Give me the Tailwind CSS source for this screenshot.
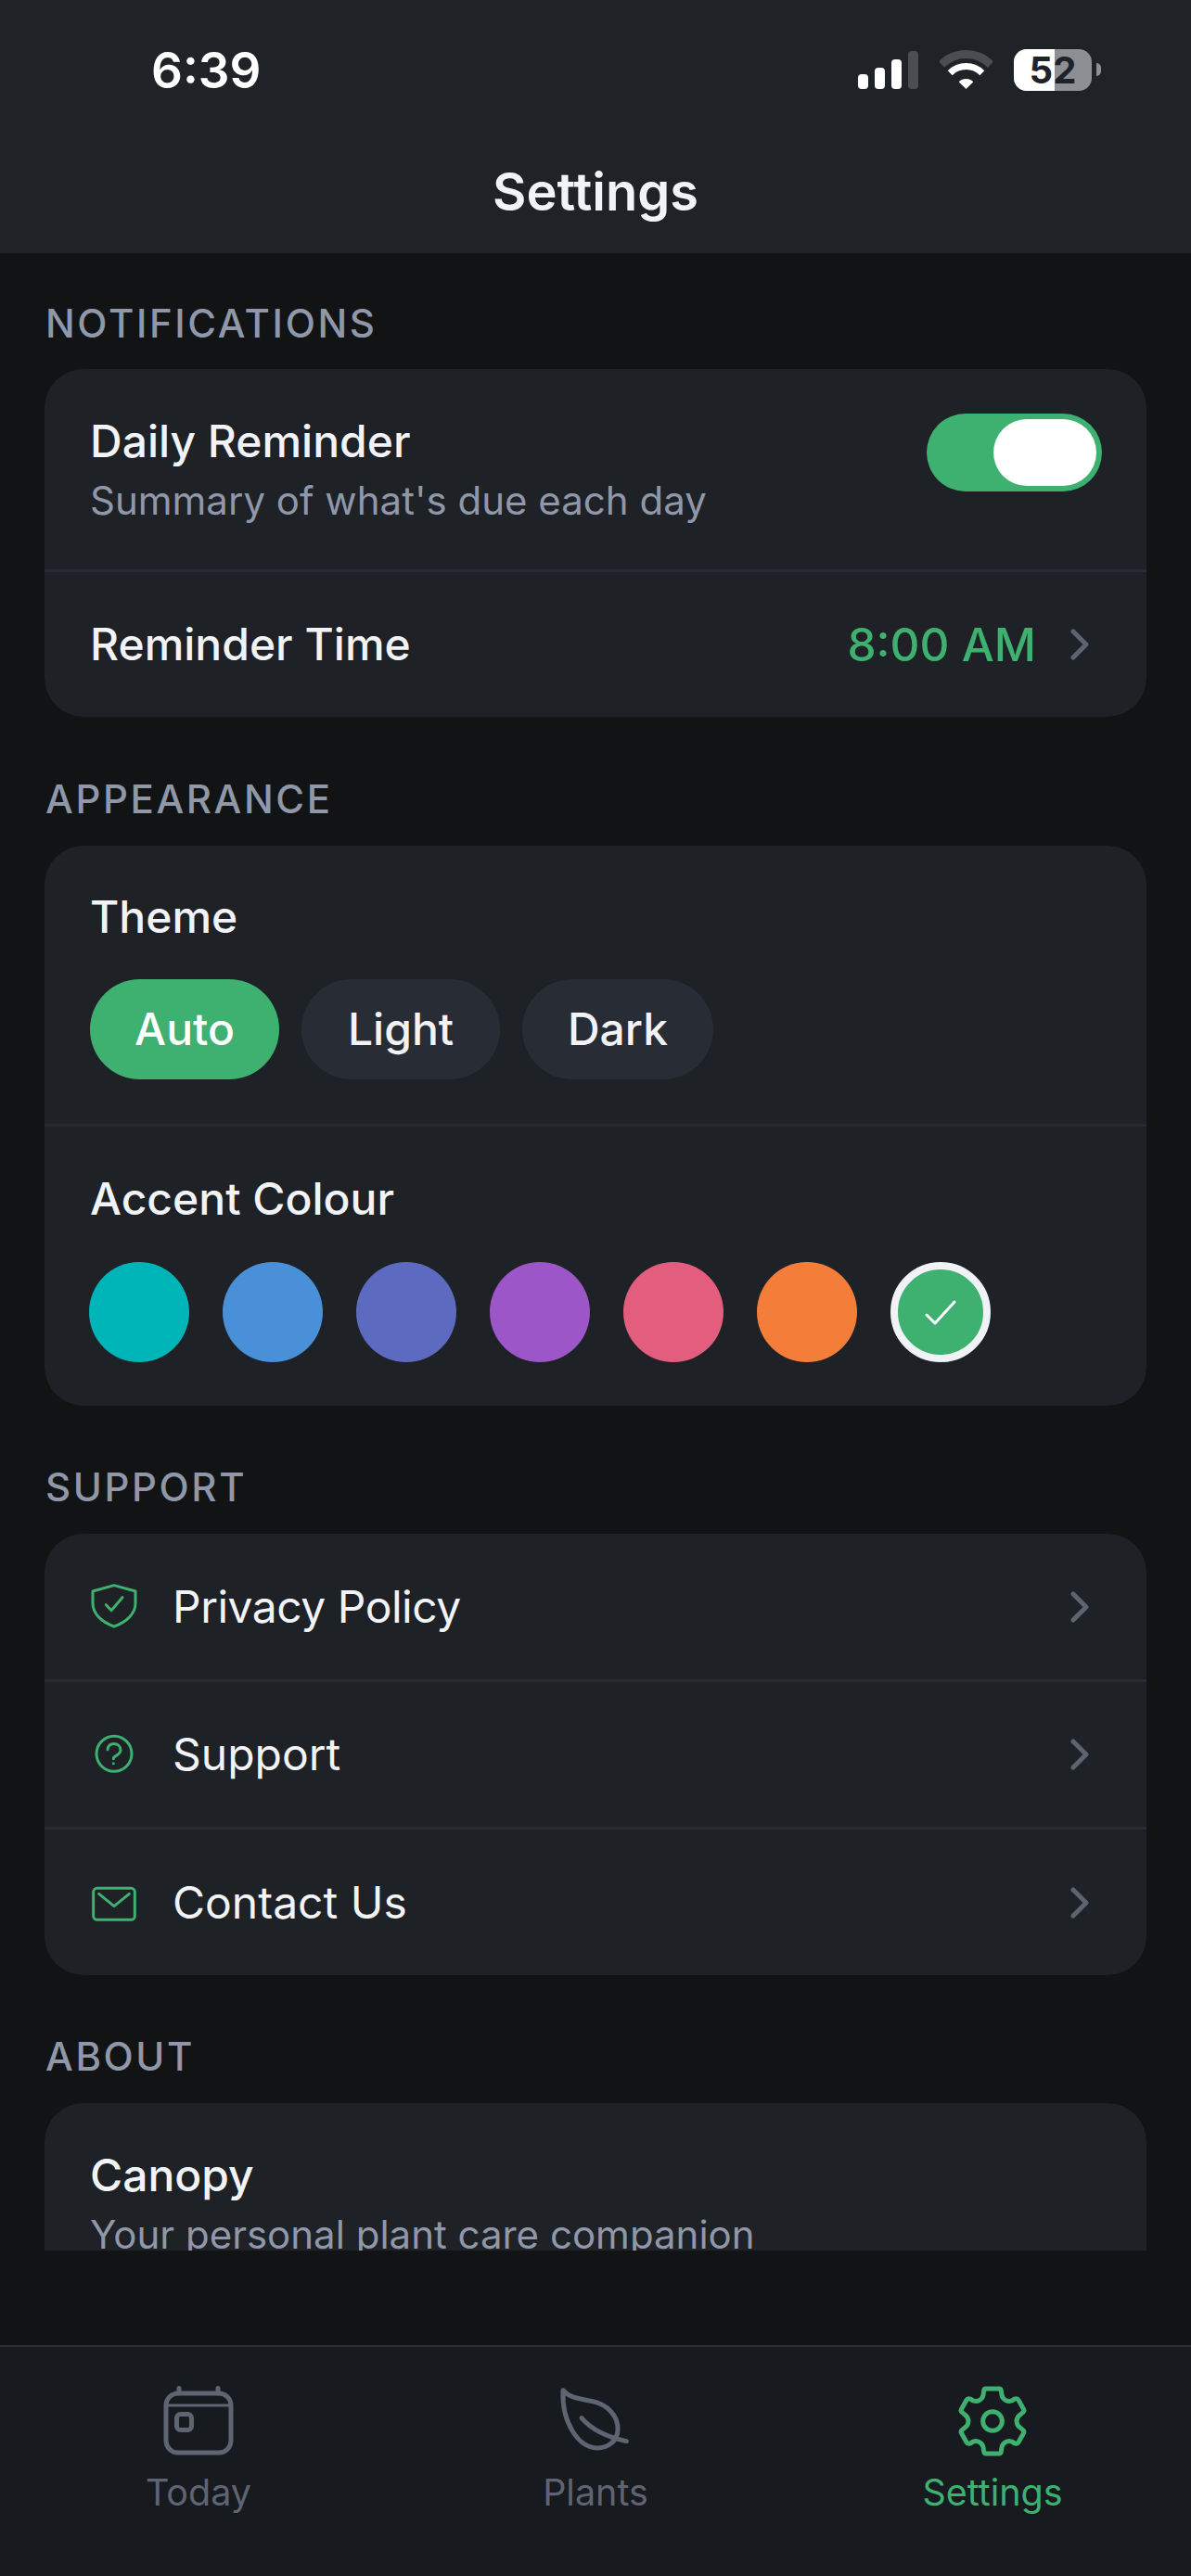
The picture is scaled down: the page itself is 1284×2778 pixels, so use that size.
<!DOCTYPE html>
<html lang="en">
<head>
    <meta charset="UTF-8">
    <meta name="viewport" content="width=device-width, initial-scale=1.0">
    <title>Settings</title>
    <script src="https://cdn.jsdelivr.net/npm/@tailwindcss/browser@4"></script>
</head>
<body class="bg-[#111315] font-['Inter',sans-serif]">
    <div class="flex flex-col w-[1284px] h-[2778px] overflow-hidden">

        <!-- Header with status bar -->
        <header class="h-[273px] shrink-0 bg-[#1f2328]">
            <div class="flex items-start h-[172px] pt-[53px]">
                <span class="w-[163px] shrink-0"></span>
                <span class="text-[53px] leading-[46px] font-semibold text-white">6:39</span>
                <div class="ml-auto mr-[97px] flex items-start">
                    <!-- signal -->
                    <svg width="65" height="42" viewBox="0 0 65 42" class="mt-[2px]">
                        <rect x="0" y="25" width="11" height="16" rx="4" fill="#fff"/>
                        <rect x="18" y="18" width="11" height="23" rx="4" fill="#fff"/>
                        <rect x="36" y="9" width="11" height="32" rx="4" fill="#fff"/>
                        <rect x="54" y="0" width="11" height="41" rx="4" fill="#4b4d52"/>
                    </svg>
                    <!-- wifi -->
                    <svg width="57" height="42" viewBox="0 0 57 42" class="ml-[23px] mt-[1px]">
                        <path d="M2 15.5A37.5 37.5 0 0 1 55 15.5" fill="none" stroke="#4b4d52" stroke-width="9"/>
                        <path d="M11.2 24.7A24.5 24.5 0 0 1 45.8 24.7" fill="none" stroke="#fff" stroke-width="7"/>
                        <path d="M28.5 42L20.7 34.2A11 11 0 0 1 36.3 34.2Z" fill="#fff"/>
                    </svg>
                    <!-- battery -->
                    <div class="relative ml-[23px] w-[84px] h-[45px] rounded-[14px] bg-[#8e8f92]">
                        <span class="absolute left-0 top-0 w-[44px] h-full rounded-l-[14px] bg-white"></span>
                        <span class="absolute inset-0 flex items-center justify-center text-[40px] leading-none font-bold text-[#1f2228]">52</span>
                    </div>
                    <span class="ml-[5px] mt-[15px] w-[5px] h-[14px] rounded-r-full bg-[#8e8f92]"></span>
                </div>
            </div>
            <h1 class="text-center text-[56px] leading-[70px] font-semibold text-[#f2f3f7]">Settings</h1>
        </header>

        <!-- Scrolling content, cut off above the tab bar -->
        <main class="h-[2154px] shrink-0 overflow-hidden px-[48px]">
            <h2 class="mt-[51px] mb-[24px] h-[50px] pl-[1px] text-[42px] leading-[50px] font-[550] tracking-[2.6px] text-[#8f97a8]">NOTIFICATIONS</h2>
            <section class="bg-[#1e2126] rounded-[42px]">
                <div class="flex items-start justify-between h-[219px] pt-[48px] pl-[49px] pr-[48px] border-b-[3px] border-[#282b33]">
                    <div>
                        <p class="text-[48px] leading-[60px] font-[450] text-[#f2f3f7]">Daily Reminder</p>
                        <p class="mt-[8px] text-[42px] leading-[52px] text-[#8f97a8]">Summary of what's due each day</p>
                    </div>
                    <div class="flex items-center justify-end w-[189px] h-[84px] rounded-full bg-[#3eb06f] pr-[6px]">
                        <span class="w-[111px] h-[72px] rounded-full bg-white"></span>
                    </div>
                </div>
                <div class="flex items-center h-[156px] pl-[49px] pr-[62px]">
                    <span class="text-[48px] font-[450] text-[#f2f3f7]">Reminder Time</span>
                    <span class="ml-auto text-[49.5px] font-[550] text-[#3eb06f]">8:00 AM</span>
                    <svg width="20" height="34" viewBox="0 0 20 34" class="ml-[37px]" fill="none" stroke="#5f6370" stroke-width="5" stroke-linecap="round" stroke-linejoin="round"><path d="M3 3L17 17L3 31"/></svg>
                </div>
            </section>

            <h2 class="mt-[61px] mb-[22px] h-[56px] pl-[1px] text-[42px] leading-[56px] font-[550] tracking-[2.6px] text-[#8f97a8]">APPEARANCE</h2>
            <section class="bg-[#1e2126] rounded-[42px]">
                <div class="h-[303px] pl-[49px] pt-[47px] border-b-[3px] border-[#282b33]">
                    <p class="text-[48px] leading-[60px] font-[450] text-[#f2f3f7]">Theme</p>
                    <div class="flex gap-[24px] mt-[37px]">
                        <span class="flex items-center justify-center w-[204px] h-[108px] rounded-full bg-[#3eb06f] text-[48px] font-[450] text-white">Auto</span>
                        <span class="flex items-center justify-center w-[214px] h-[108px] rounded-full bg-[#282c35] text-[48px] font-[450] text-[#f2f3f7]">Light</span>
                        <span class="flex items-center justify-center w-[206px] h-[108px] rounded-full bg-[#282c35] text-[48px] font-[450] text-[#f2f3f7]">Dark</span>
                    </div>
                </div>
                <div class="h-[301px] pl-[48px] pt-[48px]">
                    <p class="pl-[1px] text-[48px] leading-[60px] font-[450] text-[#f2f3f7]">Accent Colour</p>
                    <div class="flex gap-[36px] mt-[38px]">
                        <span class="w-[108px] h-[108px] rounded-full bg-[#00b5b8]"></span>
                        <span class="w-[108px] h-[108px] rounded-full bg-[#4a90d9]"></span>
                        <span class="w-[108px] h-[108px] rounded-full bg-[#5c6bc0]"></span>
                        <span class="w-[108px] h-[108px] rounded-full bg-[#9c56c8]"></span>
                        <span class="w-[108px] h-[108px] rounded-full bg-[#e35d7e]"></span>
                        <span class="w-[108px] h-[108px] rounded-full bg-[#f47d3a]"></span>
                        <span class="flex items-center justify-center w-[108px] h-[108px] rounded-full bg-[#3eb06f] border-[8px] border-[#f0f2f5]">
                            <svg width="36" height="28" viewBox="0 0 36 28" fill="none" stroke="#fff" stroke-width="3" stroke-linecap="round" stroke-linejoin="round"><path d="M3 17L12 26L33 3"/></svg>
                        </span>
                    </div>
                </div>
            </section>

            <h2 class="mt-[62px] mb-[24px] h-[52px] pl-[1px] text-[42px] leading-[52px] font-[550] tracking-[2.6px] text-[#8f97a8]">SUPPORT</h2>
            <section class="bg-[#1e2126] rounded-[42px]">
                <div class="flex items-center h-[160px] pl-[48px] pr-[62px] border-b-[3px] border-[#282b33]">
                    <svg width="54" height="54" viewBox="108 78 162 162" fill="none" stroke="#3eb06f" stroke-width="9" stroke-linecap="round" stroke-linejoin="round">
                        <path d="M189 89L258 108V146C258 182 228 208 189 222C150 208 120 182 120 146V108Z"/>
                        <path d="M163 152L180 170L216 128"/>
                    </svg>
                    <span class="ml-[36px] text-[48px] tracking-[-0.5px] text-[#f2f3f7]">Privacy Policy</span>
                    <svg width="20" height="34" viewBox="0 0 20 34" class="ml-auto" fill="none" stroke="#5f6370" stroke-width="5" stroke-linecap="round" stroke-linejoin="round"><path d="M3 3L17 17L3 31"/></svg>
                </div>
                <div class="flex items-center h-[159px] pl-[48px] pr-[62px] border-b-[3px] border-[#282b33]">
                    <svg width="54" height="54" viewBox="108 555 162 162" fill="none" stroke="#3eb06f" stroke-width="9" stroke-linecap="round" stroke-linejoin="round">
                        <circle cx="189" cy="634" r="57"/>
                        <path d="M168 620C168 595 210 595 210 622C210 640 187 638 187 650"/>
                        <path d="M187 665V665.5"/>
                    </svg>
                    <span class="ml-[36px] text-[48px] text-[#f2f3f7]">Support</span>
                    <svg width="20" height="34" viewBox="0 0 20 34" class="ml-auto" fill="none" stroke="#5f6370" stroke-width="5" stroke-linecap="round" stroke-linejoin="round"><path d="M3 3L17 17L3 31"/></svg>
                </div>
                <div class="flex items-center h-[157px] pl-[48px] pr-[62px]">
                    <svg width="54" height="54" viewBox="108 1030 162 162" fill="none" stroke="#3eb06f" stroke-width="9" stroke-linecap="round" stroke-linejoin="round">
                        <rect x="122" y="1064" width="134" height="102" rx="12"/>
                        <path d="M140 1082L189 1122L238 1082"/>
                    </svg>
                    <span class="ml-[36px] text-[48px] text-[#f2f3f7]">Contact Us</span>
                    <svg width="20" height="34" viewBox="0 0 20 34" class="ml-auto" fill="none" stroke="#5f6370" stroke-width="5" stroke-linecap="round" stroke-linejoin="round"><path d="M3 3L17 17L3 31"/></svg>
                </div>
            </section>

            <h2 class="mt-[61px] mb-[24px] h-[53px] pl-[1px] text-[42px] leading-[53px] font-[550] tracking-[2.6px] text-[#8f97a8]">ABOUT</h2>
            <section class="bg-[#1e2126] rounded-[42px] pl-[49px] pt-[48px] h-[400px]">
                <p class="text-[48px] leading-[60px] font-[450] text-[#f2f3f7]">Canopy</p>
                <p class="mt-[8px] text-[42px] leading-[52px] text-[#8f97a8]">Your personal plant care companion</p>
            </section>
        </main>

        <div class="flex-1"></div>

        <!-- Tab bar -->
        <nav class="flex h-[249px] shrink-0 bg-[#171a1f] border-t-[2px] border-[#2c2e35]">
            <div class="flex-1 flex flex-col items-center pt-[40px]">
                <svg width="80" height="80" viewBox="0 0 80 80" fill="none" stroke="#5f6472" stroke-linecap="round">
                    <rect x="5" y="10" width="70" height="64" rx="13" stroke-width="5"/>
                    <path d="M19 4.5V10M61 4.5V10" stroke-width="5"/>
                    <path d="M5 23H75" stroke-width="3"/>
                    <rect x="16.5" y="32.5" width="16" height="17" rx="4" stroke-width="5"/>
                </svg>
                <span class="mt-[12px] text-[39.5px] leading-[50px] text-[#5f6472]">Today</span>
            </div>
            <div class="flex-1 flex flex-col items-center pt-[40px]">
                <svg width="80" height="80" viewBox="110 75 240 240" fill="none" stroke="#5f6472" stroke-width="15" stroke-linecap="round" stroke-linejoin="round">
                    <path d="M125 95C145 120 180 122 215 130C270 140 305 180 302 225C300 260 270 282 235 282C175 280 120 200 125 95Z"/>
                    <path d="M185 185C215 220 260 245 330 260"/>
                </svg>
                <span class="mt-[12px] text-[39.5px] leading-[50px] text-[#5f6472]">Plants</span>
            </div>
            <div class="flex-1 flex flex-col items-center pt-[40px]">
                <svg width="80" height="80" viewBox="60 58 240 240" fill="none" stroke="#3eb06f" stroke-width="15" stroke-linecap="round" stroke-linejoin="round">
                    <path d="M158 73H202Q207 73 208 80L210 94Q212 104 222 110Q232 116 242 112L252 106Q260 103 264 110L280 138Q284 145 278 150L268 158Q258 166 258 178Q258 190 268 198L278 206Q284 211 280 218L264 246Q260 253 252 250L242 244Q232 240 222 246Q212 252 210 262L208 276Q207 283 202 283H158Q153 283 152 276L150 262Q148 252 138 246Q128 240 118 244L108 250Q100 253 96 246L80 218Q76 211 82 206L92 198Q102 190 102 178Q102 166 92 158L82 150Q76 145 80 138L96 110Q100 103 108 106L118 112Q128 116 138 110Q148 104 150 94L152 80Q153 73 158 73Z"/>
                    <circle cx="180" cy="178" r="31"/>
                </svg>
                <span class="mt-[12px] text-[39.5px] leading-[50px] text-[#3eb06f]">Settings</span>
            </div>
        </nav>
    </div>
</body>
</html>
